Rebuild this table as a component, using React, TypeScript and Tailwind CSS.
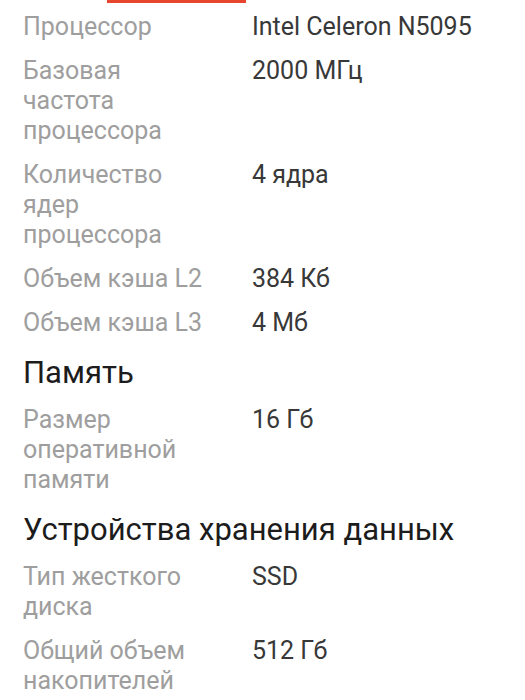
const rowsCpu = [
  { label: 'Процессор', value: 'Intel Celeron N5095' },
  { label: 'Базовая частота процессора', value: '2000 МГц' },
  { label: 'Количество ядер процессора', value: '4 ядра' },
  { label: 'Объем кэша L2', value: '384 Кб' },
  { label: 'Объем кэша L3', value: '4 Мб' },
]

const rowsMemory = [{ label: 'Размер оперативной памяти', value: '16 Гб' }]

const rowsStorage = [
  { label: 'Тип жесткого диска', value: 'SSD' },
  { label: 'Общий объем накопителей', value: '512 Гб' },
]

function SpecRow({ label, value }: { label: string; value: string }) {
  return (
    <div className="flex py-[7px] text-[25px] leading-[30px]">
      <div className="w-[229px] shrink-0 pr-[44px] text-[#9e9e9e]">{label}</div>
      <div className="flex-1 text-[#383838]">{value}</div>
    </div>
  )
}

function SectionTitle({ children }: { children: string }) {
  return <h2 className="mt-[10px] mb-[7px] text-[31px] leading-[36px] text-[#1c1c1c]">{children}</h2>
}

export default function App() {
  return (
    <div className="min-h-[700px] bg-white font-['Roboto',sans-serif]">
      <div className="ml-[107px] h-[3px] w-[139px] bg-[#e8452f]" />
      <div className="px-[23px] pt-[1.5px]">
        {rowsCpu.map(r => (
          <SpecRow key={r.label} {...r} />
        ))}

        <SectionTitle>Память</SectionTitle>
        {rowsMemory.map(r => (
          <SpecRow key={r.label} {...r} />
        ))}

        <SectionTitle>Устройства хранения данных</SectionTitle>
        {rowsStorage.map(r => (
          <SpecRow key={r.label} {...r} />
        ))}
      </div>
    </div>
  )
}
